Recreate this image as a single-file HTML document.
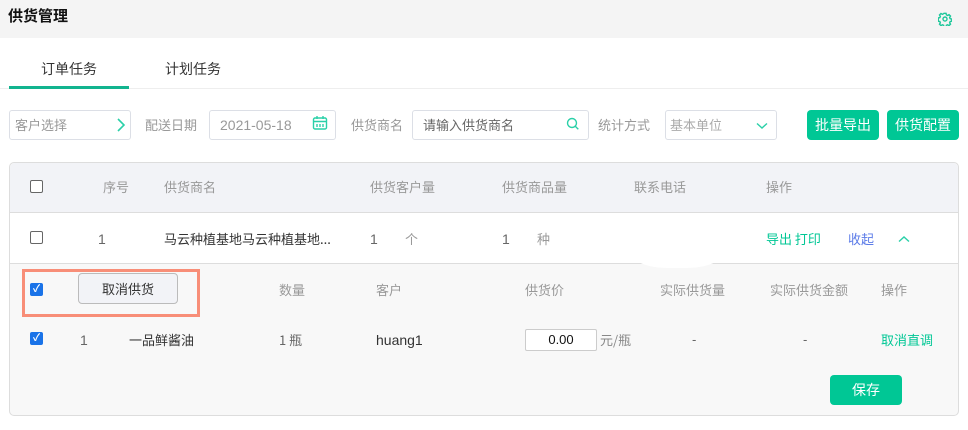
<!DOCTYPE html>
<html><head><meta charset="utf-8"><style>
*{box-sizing:border-box;margin:0;padding:0}
body{width:968px;height:430px;background:#fff;font-family:"Liberation Sans","Noto Sans CJK SC",sans-serif;font-size:13px;color:#666;position:relative;overflow:hidden}
.a{position:absolute;white-space:nowrap;line-height:18px}
.t{font-family:"Noto Sans CJK SC","Liberation Sans",sans-serif}
.box{position:absolute;border:1px solid #dcdfe6;border-radius:3px;background:#fff}
.btn{position:absolute;background:#00c795;color:#fff;border-radius:4px;text-align:center;font-size:14px;font-family:"Noto Sans CJK SC",sans-serif}
.cb{position:absolute;width:13px;height:13px;border:1px solid #666;border-radius:2px;background:#fff}
.cbc{position:absolute;width:13px;height:13px;border-radius:2px;background:#1a73e8;color:#fff;font-size:10px;line-height:13px;text-align:center;font-weight:bold}
</style></head><body>
<div class="a" style="left:0;top:0;width:968px;height:38px;background:#f4f4f4"></div>
<div class="a t" style="left:8px;top:5px;font-size:15px;line-height:22px;font-weight:bold;color:#111">供货管理</div>
<svg class="a" style="left:938px;top:12px" width="14" height="14" viewBox="0 0 16 16"><path d="M6.8 1.5h2.4l.4 1.8 1.4.7 1.6-1 1.7 1.7-1 1.6.6 1.4 1.8.4v2.4l-1.8.4-.6 1.4 1 1.6-1.7 1.7-1.6-1-1.4.6-.4 1.8H6.8l-.4-1.8-1.4-.6-1.6 1-1.7-1.7 1-1.6-.6-1.4-1.8-.4V6.8l1.8-.4.6-1.4-1-1.6 1.7-1.7 1.6 1 1.4-.7z" fill="none" stroke="#1cc79a" stroke-width="1.6"/><circle cx="8" cy="8" r="2.3" fill="none" stroke="#1cc79a" stroke-width="1.6"/></svg>
<div class="a t" style="left:41px;top:60px;font-size:14px;color:#333">订单任务</div>
<div class="a t" style="left:165px;top:60px;font-size:14px;color:#333">计划任务</div>
<div class="a" style="left:0;top:88px;width:968px;height:1px;background:#eee"></div>
<div class="a" style="left:9px;top:86px;width:120px;height:3px;background:#12b48f"></div>

<div class="box" style="left:9px;top:110px;width:122px;height:30px"></div>
<div class="a t" style="left:15px;top:116px;color:#999">客户选择</div>
<svg class="a" style="left:116px;top:117px" width="10" height="16" viewBox="0 0 10 16"><path d="M2 2l6 6-6 6" fill="none" stroke="#2ad0a8" stroke-width="1.6"/></svg>
<div class="a t" style="left:145px;top:116px;color:#999">配送日期</div>
<div class="box" style="left:209px;top:110px;width:127px;height:30px"></div>
<div class="a" style="left:220px;top:116px;color:#999;font-size:14px">2021-05-18</div>
<svg class="a" style="left:312px;top:115px" width="16" height="16" viewBox="0 0 16 16"><rect x="1.5" y="3" width="13" height="11" rx="1.5" fill="none" stroke="#2ad0a8" stroke-width="1.4"/><path d="M5 1v3M11 1v3M1.5 6.5h13M5 9v3M8 9v3M11 9v3" stroke="#2ad0a8" stroke-width="1.4"/></svg>
<div class="a t" style="left:351px;top:116px;color:#999">供货商名</div>
<div class="box" style="left:412px;top:110px;width:177px;height:30px"></div>
<div class="a t" style="left:423px;top:116px;color:#666">请输入供货商名</div>
<svg class="a" style="left:566px;top:117px" width="14" height="14" viewBox="0 0 14 14"><circle cx="6" cy="6" r="4.5" fill="none" stroke="#2ad0a8" stroke-width="1.4"/><path d="M9.3 9.3l3 3" stroke="#2ad0a8" stroke-width="1.4"/></svg>
<div class="a t" style="left:598px;top:116px;color:#999">统计方式</div>
<div class="box" style="left:665px;top:110px;width:112px;height:30px"></div>
<div class="a t" style="left:670px;top:116px;color:#aaa">基本单位</div>
<svg class="a" style="left:756px;top:122px" width="12" height="8" viewBox="0 0 12 8"><path d="M1 1.5l5 4.5 5-4.5" fill="none" stroke="#2ad0a8" stroke-width="1.4"/></svg>
<div class="btn" style="left:807px;top:110px;width:72px;height:30px;line-height:30px">批量导出</div>
<div class="btn" style="left:887px;top:110px;width:72px;height:30px;line-height:30px">供货配置</div>

<div class="a" style="left:9px;top:162px;width:950px;height:254px;border:1px solid #ddd;border-radius:5px;background:#f8f8f8"></div>
<div class="a" style="left:10px;top:163px;width:948px;height:50px;background:#f2f3f7;border-radius:5px 5px 0 0;border-bottom:1px solid #ddd"></div>
<div class="a" style="left:10px;top:213px;width:948px;height:51px;background:#fff;border-bottom:1px solid #ddd"></div>
<div class="cb" style="left:30px;top:180px"></div>
<div class="a t" style="left:103px;top:178px;color:#999">序号</div>
<div class="a t" style="left:164px;top:178px;color:#999">供货商名</div>
<div class="a t" style="left:370px;top:178px;color:#999">供货客户量</div>
<div class="a t" style="left:502px;top:178px;color:#999">供货商品量</div>
<div class="a t" style="left:634px;top:178px;color:#999">联系电话</div>
<div class="a t" style="left:766px;top:178px;color:#999">操作</div>
<div class="cb" style="left:30px;top:231px"></div>
<div class="a" style="left:98px;top:230px;font-size:14px">1</div>
<div class="a t" style="left:164px;top:230px;color:#333">马云种植基地马云种植基地...</div>
<div class="a" style="left:370px;top:230px;font-size:14px">1</div>
<div class="a t" style="left:405px;top:230px;color:#999">个</div>
<div class="a" style="left:502px;top:230px;font-size:14px">1</div>
<div class="a t" style="left:537px;top:230px;color:#999">种</div>
<div class="a" style="left:627px;top:218px;width:100px;height:50px;background:#fff;border-radius:40%"></div>
<div class="a t" style="left:766px;top:230px;color:#00c795">导出 打印</div>
<div class="a t" style="left:848px;top:230px;color:#5b7be8">收起</div>
<svg class="a" style="left:898px;top:235px" width="12" height="8" viewBox="0 0 12 8"><path d="M1 6.5l5-4.5 5 4.5" fill="none" stroke="#2ad0a8" stroke-width="1.4"/></svg>

<div class="a" style="left:22px;top:269px;width:178px;height:48px;border:3px solid #f88e78"></div>
<div class="cbc" style="left:30px;top:283px">✓</div>
<div class="a t" style="left:78px;top:273px;width:100px;height:31px;border:1px solid #bbb;border-radius:4px;background:#f2f3f7;text-align:center;line-height:29px;color:#333">取消供货</div>
<div class="a t" style="left:279px;top:281px;color:#999">数量</div>
<div class="a t" style="left:376px;top:281px;color:#999">客户</div>
<div class="a t" style="left:525px;top:281px;color:#999">供货价</div>
<div class="a t" style="left:660px;top:281px;color:#999">实际供货量</div>
<div class="a t" style="left:770px;top:281px;color:#999">实际供货金额</div>
<div class="a t" style="left:881px;top:281px;color:#999">操作</div>
<div class="cbc" style="left:30px;top:332px">✓</div>
<div class="a" style="left:80px;top:331px;font-size:14px">1</div>
<div class="a t" style="left:129px;top:331px;color:#333">一品鲜酱油</div>
<div class="a t" style="left:279px;top:331px">1 瓶</div>
<div class="a" style="left:376px;top:331px;color:#333;font-size:14px">huang1</div>
<div class="a" style="left:525px;top:329px;width:72px;height:22px;border:1px solid #ccc;border-radius:2px;background:#fff;text-align:center;line-height:20px;color:#111">0.00</div>
<div class="a t" style="left:600px;top:331px;color:#888">元/瓶</div>
<div class="a" style="left:692px;top:331px">-</div>
<div class="a" style="left:803px;top:331px">-</div>
<div class="a t" style="left:881px;top:331px;color:#00c795">取消直调</div>
<div class="btn" style="left:830px;top:375px;width:72px;height:30px;line-height:30px">保存</div>
</body></html>
